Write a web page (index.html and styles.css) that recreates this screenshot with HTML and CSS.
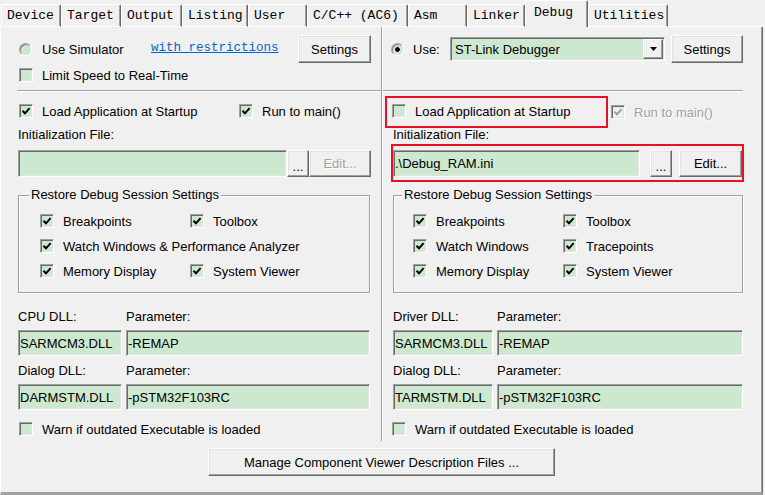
FILE: index.html
```html
<!DOCTYPE html>
<html>
<head>
<meta charset="utf-8">
<title>Options - Debug</title>
<link rel="stylesheet" href="styles.css">
</head>
<body>
<div class="dialog">
  <nav class="tabs">
    <span class="tab-edge"></span>
    <span class="tab w-device">Device</span>
    <span class="tab w-target">Target</span>
    <span class="tab w-output">Output</span>
    <span class="tab w-listing">Listing</span>
    <span class="tab w-user">User</span>
    <span class="tab w-cc">C/C++ (AC6)</span>
    <span class="tab w-asm">Asm</span>
    <span class="tab w-linker">Linker</span>
    <span class="tab active w-debug">Debug</span>
    <span class="tab w-util">Utilities</span>
    <span class="tab-fill"></span>
  </nav>

  <main class="page">
    <div class="cols">
      <!-- LEFT: Simulator -->
      <section class="col col-left">
        <div class="row-top">
          <label class="opt radio-opt sim-opt"><span class="radio"></span>Use Simulator</label>
          <a class="link">with restrictions</a>
          <button class="btn btn-settings">Settings</button>
        </div>
        <div class="row speed-row">
          <label class="opt cb-first"><span class="cb"></span>Limit Speed to Real-Time</label>
        </div>
        <hr class="sep">
        <div class="row load-row">
          <label class="opt cb-first load-opt"><span class="cb"><svg viewBox="0 0 12 12"><path d="M2.5 5.8 L5 8.3 L9.6 3.2"/></svg></span>Load Application at Startup</label>
          <label class="opt"><span class="cb"><svg viewBox="0 0 12 12"><path d="M2.5 5.8 L5 8.3 L9.6 3.2"/></svg></span>Run to main()</label>
        </div>
        <div class="caption">Initialization File:</div>
        <div class="file-row">
          <span class="field file"></span>
          <button class="btn btn-dots">...</button>
          <button class="btn btn-edit" disabled>Edit...</button>
        </div>
        <fieldset class="group">
          <legend>Restore Debug Session Settings</legend>
          <div class="group-grid">
            <label class="opt"><span class="cb"><svg viewBox="0 0 12 12"><path d="M2.5 5.8 L5 8.3 L9.6 3.2"/></svg></span>Breakpoints</label>
            <label class="opt"><span class="cb"><svg viewBox="0 0 12 12"><path d="M2.5 5.8 L5 8.3 L9.6 3.2"/></svg></span>Toolbox</label>
            <label class="opt span2"><span class="cb"><svg viewBox="0 0 12 12"><path d="M2.5 5.8 L5 8.3 L9.6 3.2"/></svg></span>Watch Windows &amp; Performance Analyzer</label>
            <label class="opt"><span class="cb"><svg viewBox="0 0 12 12"><path d="M2.5 5.8 L5 8.3 L9.6 3.2"/></svg></span>Memory Display</label>
            <label class="opt"><span class="cb"><svg viewBox="0 0 12 12"><path d="M2.5 5.8 L5 8.3 L9.6 3.2"/></svg></span>System Viewer</label>
          </div>
        </fieldset>
        <div class="dll">
          <span class="dll-label">CPU DLL:</span>
          <span class="dll-label">Parameter:</span>
          <span class="field">SARMCM3.DLL</span>
          <span class="field">-REMAP</span>
          <span class="dll-label">Dialog DLL:</span>
          <span class="dll-label">Parameter:</span>
          <span class="field">DARMSTM.DLL</span>
          <span class="field">-pSTM32F103RC</span>
        </div>
        <div class="row warn-row">
          <label class="opt cb-first"><span class="cb"></span>Warn if outdated Executable is loaded</label>
        </div>
      </section>

      <!-- RIGHT: Debugger -->
      <section class="col col-right">
        <div class="row-top">
          <label class="opt radio-opt use-opt"><span class="radio on"></span>Use:</label>
          <div class="combo">
            <span class="combo-text">ST-Link Debugger</span>
            <span class="combo-btn"><svg viewBox="0 0 7 4"><path d="M0 0 H7 L3.5 4 Z"/></svg></span>
          </div>
          <button class="btn btn-settings">Settings</button>
        </div>
        <hr class="sep">
        <div class="hl-row">
          <div class="hl hl-load">
            <label class="opt"><span class="cb"></span>Load Application at Startup</label>
          </div>
          <label class="opt disabled run-opt"><span class="cb"><svg viewBox="0 0 12 12"><path d="M2.5 5.8 L5 8.3 L9.6 3.2"/></svg></span>Run to main()</label>
        </div>
        <div class="caption">Initialization File:</div>
        <div class="hl hl-file">
          <div class="file-row">
            <span class="field file">.\Debug_RAM.ini</span>
            <button class="btn btn-dots">...</button>
            <button class="btn btn-edit">Edit...</button>
          </div>
        </div>
        <fieldset class="group">
          <legend>Restore Debug Session Settings</legend>
          <div class="group-grid">
            <label class="opt"><span class="cb"><svg viewBox="0 0 12 12"><path d="M2.5 5.8 L5 8.3 L9.6 3.2"/></svg></span>Breakpoints</label>
            <label class="opt"><span class="cb"><svg viewBox="0 0 12 12"><path d="M2.5 5.8 L5 8.3 L9.6 3.2"/></svg></span>Toolbox</label>
            <label class="opt"><span class="cb"><svg viewBox="0 0 12 12"><path d="M2.5 5.8 L5 8.3 L9.6 3.2"/></svg></span>Watch Windows</label>
            <label class="opt"><span class="cb"><svg viewBox="0 0 12 12"><path d="M2.5 5.8 L5 8.3 L9.6 3.2"/></svg></span>Tracepoints</label>
            <label class="opt"><span class="cb"><svg viewBox="0 0 12 12"><path d="M2.5 5.8 L5 8.3 L9.6 3.2"/></svg></span>Memory Display</label>
            <label class="opt"><span class="cb"><svg viewBox="0 0 12 12"><path d="M2.5 5.8 L5 8.3 L9.6 3.2"/></svg></span>System Viewer</label>
          </div>
        </fieldset>
        <div class="dll">
          <span class="dll-label">Driver DLL:</span>
          <span class="dll-label">Parameter:</span>
          <span class="field">SARMCM3.DLL</span>
          <span class="field">-REMAP</span>
          <span class="dll-label">Dialog DLL:</span>
          <span class="dll-label">Parameter:</span>
          <span class="field">TARMSTM.DLL</span>
          <span class="field">-pSTM32F103RC</span>
        </div>
        <div class="row warn-row">
          <label class="opt cb-first"><span class="cb"></span>Warn if outdated Executable is loaded</label>
        </div>
      </section>
    </div>

    <div class="footer">
      <button class="btn btn-manage">Manage Component Viewer Description Files ...</button>
    </div>
  </main>
</div>
</body>
</html>
```

FILE: styles.css
```css
* { box-sizing: border-box; }

html, body { margin: 0; padding: 0; }

body {
  width: 765px;
  height: 495px;
  overflow: hidden;
  background: #f0f0f0;
  font-family: "Liberation Sans", Arial, sans-serif;
  font-size: 13px;
  color: #000;
}

.dialog { width: 765px; height: 495px; }

/* ---------- tabs ---------- */
.tabs {
  display: flex;
  align-items: flex-end;
  height: 27px;
  font-family: "Liberation Mono", "Courier New", monospace;
  font-size: 13px;
}
.tab-edge { width: 1px; height: 1px; border-bottom: 1px solid #fff; flex: none; }
.tab-fill { flex: 1; height: 1px; border-bottom: 1px solid #fff; margin-right: 2px; }
.tab {
  flex: none;
  height: 23px;
  line-height: 21px;
  padding-left: 5px;
  white-space: nowrap;
  border-top: 1px solid #fff;
  border-left: 1px solid #fff;
  border-right: 1px solid #696969;
  border-bottom: 1px solid #fff;
  border-radius: 2px 2px 0 0;
  box-shadow: inset -1px 0 0 #a0a0a0;
}
.tab.active {
  height: 27px;
  padding-top: 2px;
  padding-left: 8px;
  line-height: 20px;
  border-bottom: none;
}
.w-device { width: 60px; }
.w-target { width: 60px; }
.w-output { width: 61px; }
.w-listing { width: 66px; }
.w-user { width: 59px; }
.w-cc { width: 101px; }
.w-asm { width: 59px; }
.w-linker { width: 58px; }
.w-debug { width: 63px; }
.w-util { width: 80px; }

/* ---------- page ---------- */
.page {
  height: 468px;
  margin-right: 2px;
  border-left: 1px solid #fff;
  border-right: 1px solid #696969;
  border-bottom: 3px solid #a0a0a0;
  box-shadow: inset -1px 0 0 #a0a0a0;
  display: flex;
  flex-direction: column;
}

.cols {
  display: grid;
  grid-template-columns: 381px 1fr;
  height: 414px;
}

.col { display: flex; flex-direction: column; }
.col-left { padding: 0 10px 0 17px; border-right: 1px solid #a0a0a0; }
.col-right { padding: 0 19px 0 10px; border-left: 1px solid #fff; }

/* ---------- generic rows ---------- */
.row-top { display: flex; align-items: center; height: 28px; margin-top: 8px; }
.row { display: flex; align-items: center; height: 16px; }

.opt {
  display: flex;
  align-items: center;
  gap: 9px;
  height: 16px;
  white-space: nowrap;
  flex: none;
}
.radio-opt { gap: 10px; }
.cb-first { margin-left: 1px; }
.col-right .cb-first { margin-left: -1px; }

.sim-opt { width: 132px; margin-left: 1px; }
.use-opt { width: 59px; margin-left: -2px; gap: 9px; }

.link {
  font-family: "Liberation Mono", "Courier New", monospace;
  font-size: 12.5px;
  color: #0066cc;
  text-decoration: underline;
  margin-top: -3px;
}

.speed-row { margin-top: 4px; }

.sep {
  height: 2px;
  border: 0;
  border-top: 1px solid #a0a0a0;
  border-bottom: 1px solid #fff;
  margin: 7px -10px 0 -1px;
}
.col-right .sep { margin: 27px 0 0 -10px; }

.load-row { margin-top: 11px; }
.load-opt { width: 220px; }

.caption { height: 14px; line-height: 14px; margin-top: 9px; }
.col-right .caption { margin-top: 0; }

.file-row { display: flex; height: 27px; margin-top: 8px; }
.hl .file-row { margin-top: 0; }
.file-row .field { flex: 1; height: 27px; }
.file-row .btn { height: 27px; }
.btn-dots { width: 22px; margin-left: 11px; padding-top: 5px !important; }
.btn-edit { width: 62px; margin-left: 8px; }
.col-right .btn-dots { margin-left: 10px; }
.col-right .btn-edit { width: 63px; margin-left: 7px; }

/* ---------- highlight boxes ---------- */
.hl { border: 2px solid #e81123; }
.hl-row { display: flex; align-items: center; margin: 4px 0 0 -8px; }
.hl-load {
  width: 223px;
  height: 32px;
  padding: 0 0 2px 5px;
  display: flex;
  align-items: center;
}
.run-opt { margin-left: 3px; }
.hl-file { margin: 2px -1px 0 -2px; padding: 4px 0 3px 0; }

/* ---------- controls ---------- */
.cb {
  width: 14px;
  height: 14px;
  flex: none;
  background: #cce8cf;
  border: 1px solid;
  border-color: #a0a0a0 #fff #fff #a0a0a0;
  box-shadow: inset 1px 1px 0 #696969, inset -1px -1px 0 #e3e3e3;
  display: flex;
  align-items: center;
  justify-content: center;
}
.cb svg { width: 12px; height: 12px; }
.cb path { fill: none; stroke: #000; stroke-width: 2; }

.disabled { color: #a0a0a0; text-shadow: 1px 1px 0 #fff; }
.disabled .cb { background: #f0f0f0; }
.disabled .cb path { stroke: #a0a0a0; }

.radio {
  width: 13px;
  height: 13px;
  flex: none;
  border-radius: 50%;
  background: #cce8cf;
  border: 1px solid;
  border-color: #a0a0a0 #fff #fff #a0a0a0;
  box-shadow: inset 1px 1px 0 #8a8a8a;
}
.radio.on { background: radial-gradient(circle, #000 0 2px, #cce8cf 2.6px); }

.field {
  display: flex;
  align-items: center;
  background: #cce8cf;
  border: 1px solid;
  border-color: #a0a0a0 #fff #fff #a0a0a0;
  box-shadow: inset 1px 1px 0 #696969, inset -1px -1px 0 #e3e3e3;
  padding-left: 1px;
  white-space: nowrap;
  overflow: hidden;
  flex: none;
}

.btn {
  font-family: inherit;
  font-size: 13px;
  color: #000;
  background: #f0f0f0;
  border: 1px solid;
  border-color: #fff #696969 #696969 #fff;
  box-shadow: inset -1px -1px 0 #a0a0a0, inset 1px 1px 0 #e3e3e3;
  padding: 0;
  margin: 0;
  height: 28px;
  flex: none;
}
.btn:disabled { color: #a0a0a0; text-shadow: 1px 1px 0 #fff; }
.btn-settings { width: 73px; margin-left: auto; }
.col-right .btn-settings { width: 72px; }

.combo {
  display: flex;
  width: 215px;
  height: 24px;
  background: #cce8cf;
  border: 1px solid;
  border-color: #a0a0a0 #fff #fff #a0a0a0;
  box-shadow: inset 1px 1px 0 #696969, inset -1px -1px 0 #e3e3e3;
  padding: 1px;
}
.combo-text { flex: 1; display: flex; align-items: center; padding-left: 3px; }
.combo-btn {
  width: 20px;
  display: flex;
  align-items: center;
  justify-content: center;
  background: #f0f0f0;
  border: 1px solid;
  border-color: #fff #696969 #696969 #fff;
  box-shadow: inset -1px -1px 0 #a0a0a0;
}
.combo-btn svg { width: 7px; height: 4px; }
.combo-btn path { fill: #000; }

/* ---------- group box ---------- */
.group {
  margin: 10px 1px 0 0;
  padding: 10px 0 13px 21px;
  border: 1px solid #a0a0a0;
  box-shadow: inset 1px 1px 0 #fff, 1px 1px 0 #fff;
  min-width: 0;
}
.col-right .group { margin: 5px 0 0 0; padding-left: 19px; }
.group legend {
  margin-left: -11px;
  padding: 0 2px;
  line-height: 16px;
  height: 16px;
  background: #f0f0f0;
}
.group-grid {
  display: grid;
  grid-template-columns: 150px auto;
  grid-auto-rows: 16px;
  row-gap: 9px;
}
.span2 { grid-column: span 2; }

/* ---------- DLL section ---------- */
.dll {
  display: grid;
  grid-template-columns: 104px 1fr;
  grid-template-rows: 14px 32px 22px 32px;
  column-gap: 4px;
  margin: 17px 1px 0 0;
}
.col-right .dll { grid-template-columns: 100px 1fr; margin-right: 0; }
.dll > * { align-self: end; }
.dll-label { line-height: 14px; height: 14px; }
.dll .field { height: 26px; }

.warn-row { margin-top: 11px; }

/* ---------- footer ---------- */
.footer { display: flex; justify-content: center; padding-top: 7px; }
.btn-manage { width: 347px; height: 28px; }
```
